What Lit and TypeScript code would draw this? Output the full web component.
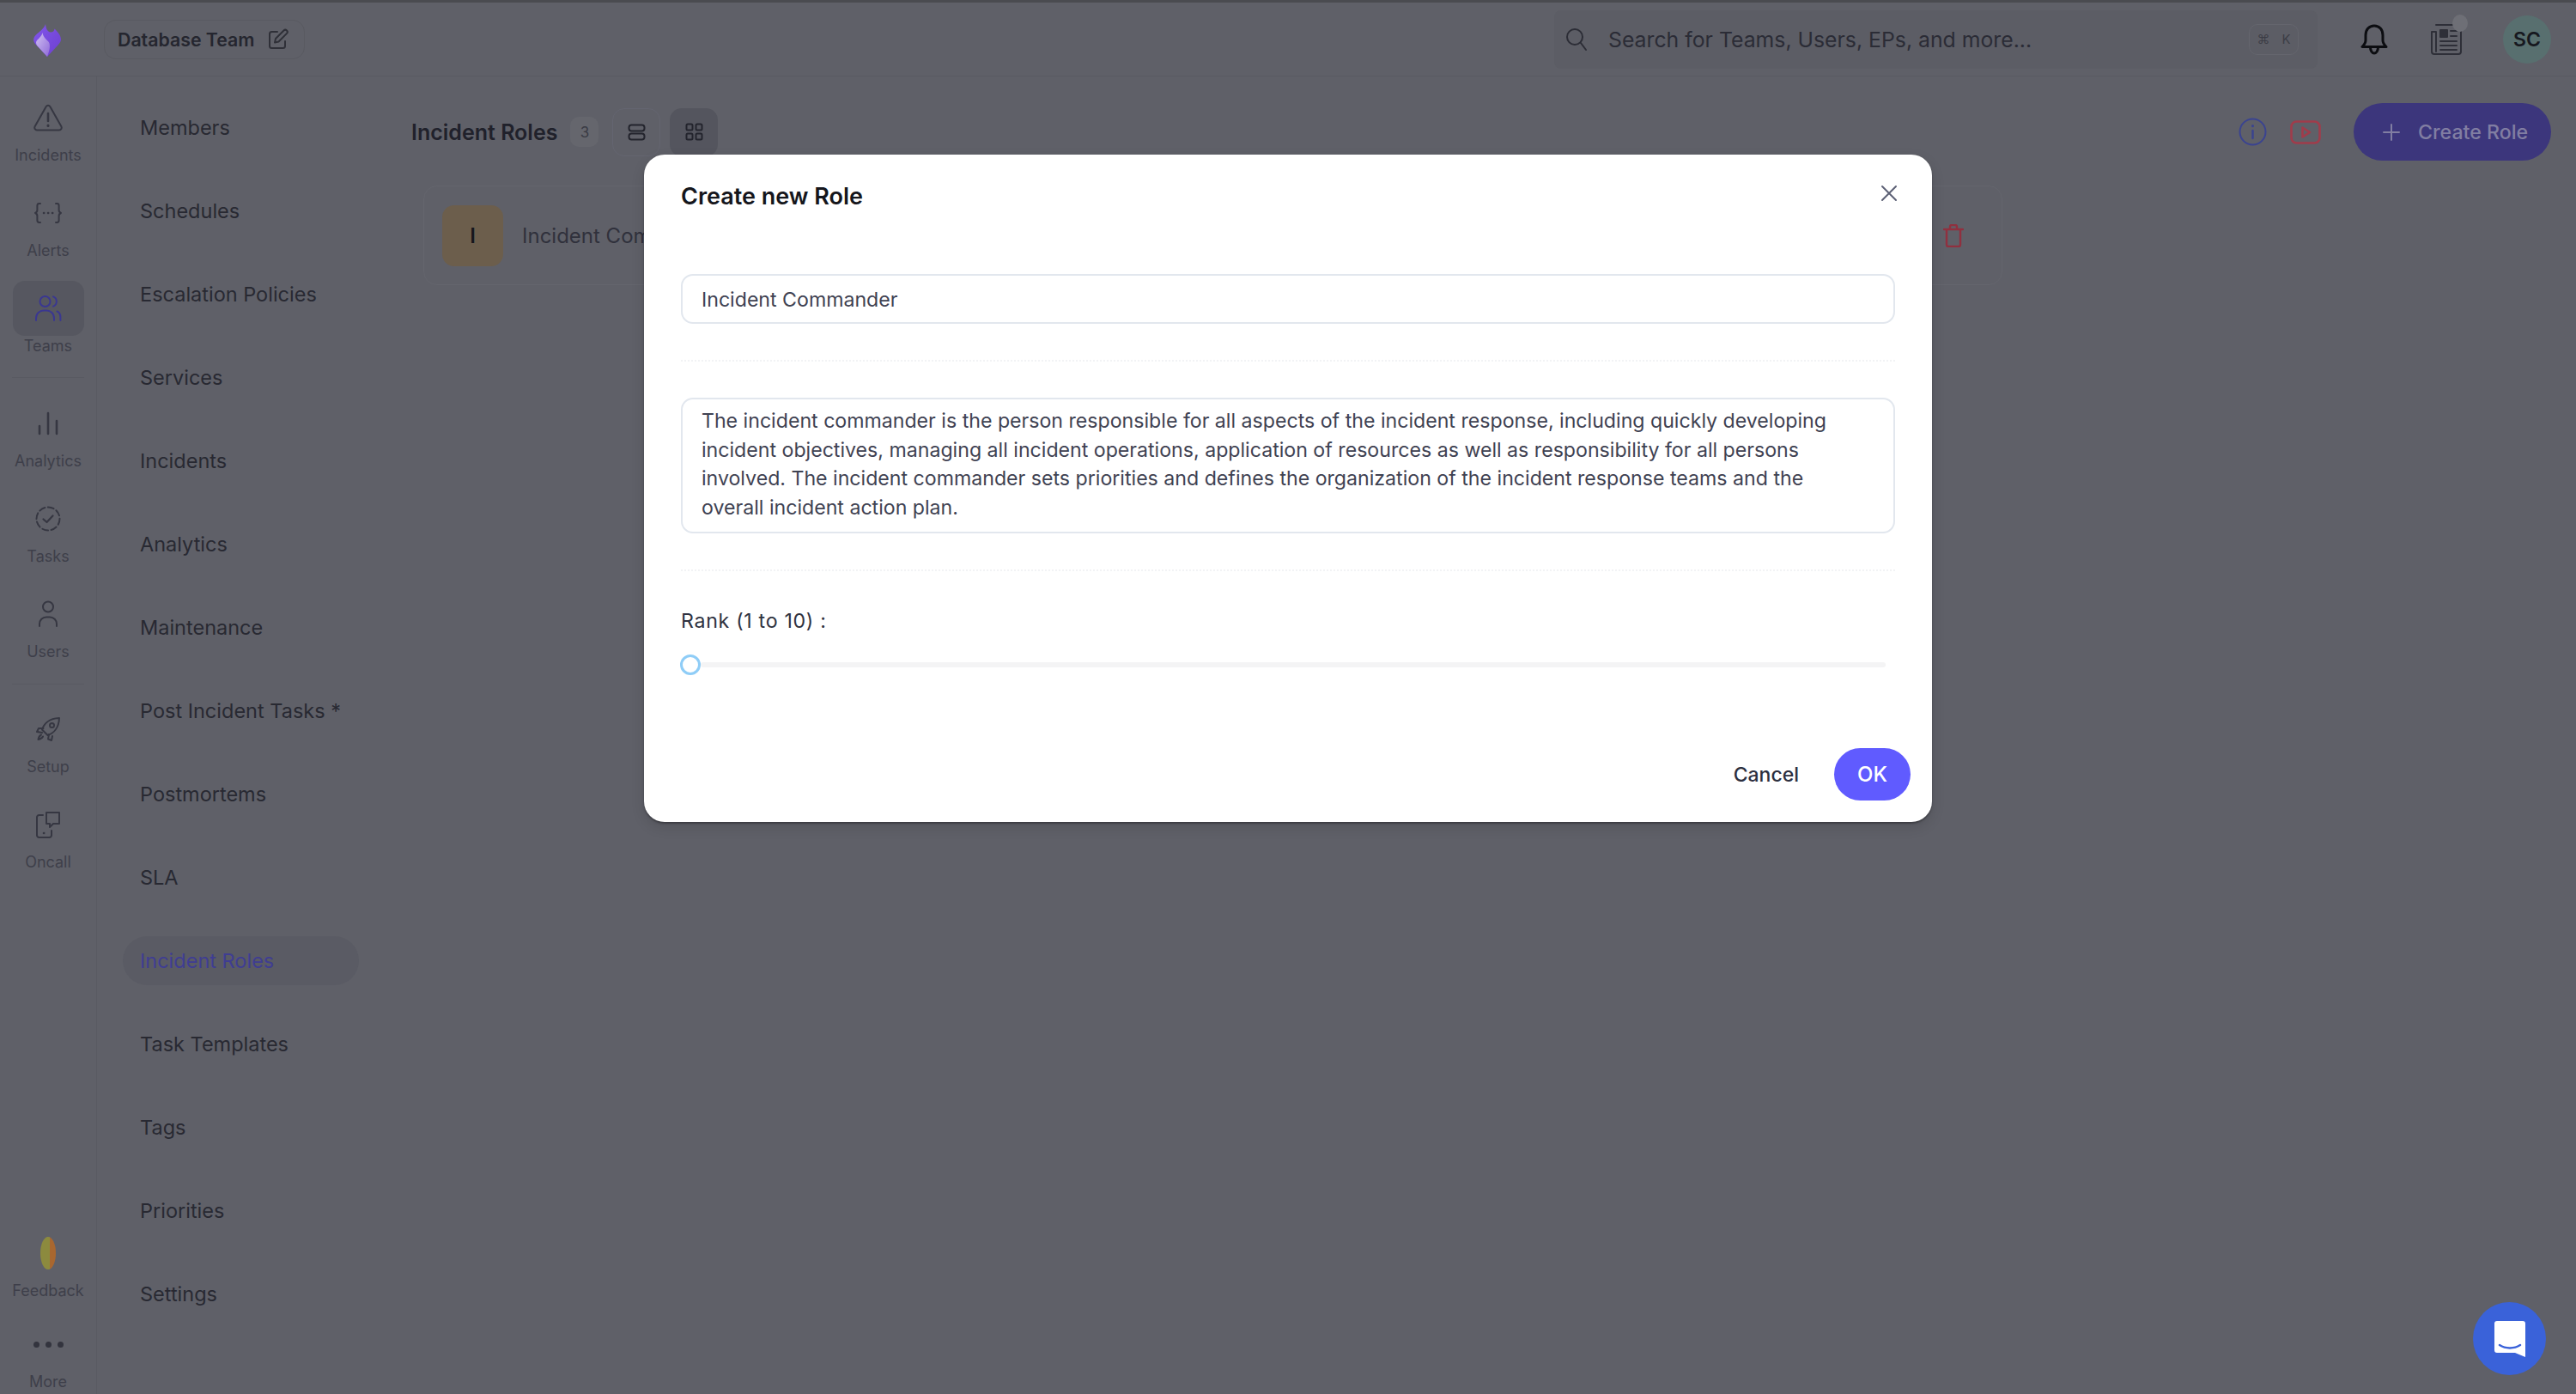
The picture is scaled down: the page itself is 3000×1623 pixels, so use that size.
import { LitElement, html, css, svg } from "lit";
import { customElement } from "lit/decorators.js";

const strokeIcon = (w: number, h: number, vb: string, body: unknown, cls = "") =>
  html`<svg class=${cls} width=${w} height=${h} viewBox=${vb} fill="none" stroke="currentColor" stroke-width="2" stroke-linecap="round" stroke-linejoin="round">${body}</svg>`;

const railIcons: Record<string, unknown> = {
  incidents: strokeIcon(36, 32, "0 0 36 32", svg`<path d="M15.6 3.2 2.6 26.2A2.8 2.8 0 0 0 5 30.4h26a2.8 2.8 0 0 0 2.4-4.2l-13-23a2.8 2.8 0 0 0-4.8 0Z"/><path d="M18 11v9" stroke-width="2.6"/><path d="M18 25v.4" stroke-width="3"/>`),
  alerts: strokeIcon(32, 26, "0 0 32 26", svg`<path d="M7 2H5.6C4 2 3.4 3 3.4 4.4v5.4c0 1.6-.8 2.6-2.4 3.2 1.6.6 2.4 1.6 2.4 3.2v5.4C3.4 23 4 24 5.6 24H7"/><path d="M25 2h1.4c1.6 0 2.2 1 2.2 2.4v5.4c0 1.6.8 2.6 2.4 3.2-1.6.6-2.4 1.6-2.4 3.2v5.4c0 1.4-.6 2.4-2.2 2.4H25"/><path d="M11 13h.2M16 13h.2M21 13h.2" stroke-width="2.6"/>`),
  teams: strokeIcon(32, 32, "0 0 32 32", svg`<circle cx="12.5" cy="8" r="6"/><path d="M22 2.4a6 6 0 0 1 0 11.2"/><path d="M2 30v-2.5C2 22 6 18.5 11 18.5h3c5 0 9 3.5 9 9V30"/><path d="M26.500 19.500c2.500 1 3.900 3.800 3.900 7V30"/>`),
  analytics: strokeIcon(26, 28, "0 0 26 28", svg`<path d="M3 17v9M13 2v24M23 11v15" stroke-width="2.6"/>`),
  tasks: strokeIcon(32, 32, "0 0 32 32", svg`<circle cx="16" cy="16" r="13.500" stroke-dasharray="7 3.500"/><path d="m10.500 16.500 4 3.500 7-7.500" stroke-width="2.200"/>`),
  users: strokeIcon(24, 32, "0 0 24 32", svg`<circle cx="12" cy="7.500" r="6"/><path d="M2 30v-2.500c0-4.500 3.500-8 8-8h4c4.500 0 8 3.500 8 8V30"/>`),
  setup: strokeIcon(30, 30, "0 0 30 30", svg`<path d="M11 18.500 8 15.500c2-6.500 8-13 20-13.500-.5 12-7 18-13.500 20Z"/><path d="M9.500 14H4l-2 4 6 1M16 21l-1 5.500 4 1.500 1-5"/><circle cx="19.500" cy="10.500" r="2.500"/><path d="M7 21.500c-2 1-3 3-3.500 5.500 2.500-.5 4.500-1.500 5.500-3.500"/>`),
  oncall: strokeIcon(30, 32, "0 0 30 32", svg`<path d="M9 5H4.500A2.500 2.500 0 0 0 2 7.500v21A2.500 2.500 0 0 0 4.500 31h12a2.500 2.500 0 0 0 2.500-2.500V23"/><path d="M13 2h15v13h-7l-4 4v-4h-4Z" /><path d="M10 26h.2" stroke-width="2.600"/>`),
};

const logo = html`<svg width="34" height="40" viewBox="0 0 34 40">
  <defs>
    <linearGradient id="lg1" x1="0" y1="0" x2="1" y2="1"><stop offset="0" stop-color="#8256ea"/><stop offset="1" stop-color="#6d3fd0"/></linearGradient>
    <linearGradient id="lg2" x1="0" y1="0" x2="1" y2="1"><stop offset="0" stop-color="#d0c0f2"/><stop offset="1" stop-color="#8f6ad8"/></linearGradient>
  </defs>
  <path fill="url(#lg1)" d="M15 1C15.500 6 17 10 21 10.500 24 10.500 25 9 25.500 6.500 29 10 33 14 33 19 33 21 32 22.500 30 25L17 39 3 24C1 21.500 .5 18.500 2 16 5 11 13 8 15 1Z"/>
  <path fill="url(#lg2)" d="M11.500 11C12 15.500 15 18 18 21 21 24 20.500 30 17 39L5.500 26.500C3.500 24 3.500 21.500 5.500 19.500 8 17 10.500 15 11.500 11Z"/>
</svg>`;

const railTop = [["incidents", "Incidents"], ["alerts", "Alerts"], ["teams", "Teams", "active"]];
const railMid = [["analytics", "Analytics"], ["tasks", "Tasks"], ["users", "Users"]];
const railLow = [["setup", "Setup"], ["oncall", "Oncall"]];

const subNav = ["Members", "Schedules", "Escalation Policies", "Services", "Incidents", "Analytics", "Maintenance", "Post Incident Tasks *", "Postmortems", "SLA", "Incident Roles", "Task Templates", "Tags", "Priorities", "Settings"];

@customElement("app-root")
export class AppRoot extends LitElement {
  static styles = css`
    :host { display: block; width: 3000px; height: 1623px; overflow: hidden; position: relative; background: #5f6068; font-family: Inter, "Noto Sans", sans-serif; color: #22232c; }
    * { box-sizing: border-box; }
    .page { display: flex; flex-direction: column; height: 1623px; }
    .top { height: 89px; flex: none; display: flex; align-items: center; border-top: 3px solid #4a4b50; border-bottom: 1px solid #595a62; background: #5f6068; }
    .logo-cell { width: 111px; display: flex; justify-content: center; padding-top: 2px; flex: none; }
    .logo-cell svg { margin-right: 2px; }
    .team { margin-left: 10px; width: 234px; height: 46px; border: 1px solid #595a61; border-radius: 14px; display: flex; align-items: center; padding-left: 15px; gap: 16px; font-size: 21.300px; font-weight: 600; color: #25262f; }
    .team svg { color: #2f3038; }
    .search { margin-left: 1455px; width: 889px; height: 68px; background: #5c5d65; border-radius: 8px; display: flex; align-items: center; padding-left: 13px; position: relative; }
    .search svg { color: #2c2d36; }
    .search span.ph { margin-left: 24px; font-size: 24.800px; color: #2b2c36; white-space: nowrap; }
    .kbd { margin-left: auto; margin-right: 22px; width: 58px; height: 36px; border: 1px solid #64656d; border-radius: 10px; display: flex; align-items: center; justify-content: center; gap: 14px; font-size: 15px; color: #3c3d46; }
    .bell { margin-left: 50px; color: #0c0d11; display: block; }
    .news { margin-left: 49px; position: relative; display: flex; color: #2e2f38; }
    .news i { position: absolute; right: -6px; top: -10px; width: 18px; height: 20px; border-radius: 50%; background: #6e6f76; }
    .avatar { margin-left: 47px; width: 56px; height: 56px; border-radius: 50%; background: #586f6f; display: flex; align-items: center; justify-content: center; font-size: 23px; font-weight: 600; color: #17181f; }

    .body { flex: 1; display: flex; min-height: 0; }
    .rail { width: 113px; flex: none; border-right: 1px solid #595a62; display: flex; flex-direction: column; padding-top: 16px; }
    .rail-item { height: 90px; margin-bottom: 21px; display: flex; flex-direction: column; align-items: center; color: #363742; }
    .rail-item.active { margin-bottom: 20px; }
    .tile { width: 83px; height: 64px; border-radius: 14px; display: flex; align-items: center; justify-content: center; flex: none; }
    .rail-item.active .tile { background: #565760; color: #3a3791; }
    .rail-item span { height: 24px; line-height: 24px; font-size: 18px; color: #3e3f4a; white-space: nowrap; }
    .rail-sep { height: 1px; margin: 2px 14px 21px; background: #595a62; flex: none; }
    .rail-sep.b { margin-bottom: 20px; }
    .rail-bottom { margin-top: auto; }
    .rail-bottom .rail-item:last-child { margin-bottom: 0; }
    .rail-bottom .rail-item:first-child { margin-bottom: 16px; }
    .coin { width: 18px; height: 38px; border-radius: 50%; background: linear-gradient(90deg, #8c8a3e 0 62%, #a9672f 62%); }
    .dots { display: flex; gap: 7px; }
    .dots i { width: 7px; height: 7px; border-radius: 50%; background: #33343e; }

    .subnav { width: 365px; flex: none; padding: 29px 0 0 30px; display: flex; flex-direction: column; gap: 37.070px; }
    .subnav a { width: 275px; height: 60px; border-radius: 30px; padding-left: 20px; display: flex; align-items: center; font-size: 23.500px; color: #282932; white-space: nowrap; }
    .subnav a.active { background: #5a5b64; color: #3f3d92; height: 57px; margin: 1.500px 0; }

    .content { flex: 1; min-width: 0; padding: 36px 29px 0 0; }
    .chead { display: flex; align-items: center; height: 57px; }
    .chead h1 { margin: 0 0 0 1px; font-size: 25px; font-weight: 600; color: #20212b; white-space: nowrap; }
    .count { margin-left: 15px; width: 33px; height: 35px; border-radius: 10px; background: #65666d; display: flex; align-items: center; justify-content: center; font-size: 17px; color: #3a3b44; }
    .vbtn { width: 56px; height: 56px; border-radius: 14px; display: flex; align-items: center; justify-content: center; color: #23242d; }
    .vbtn.first { margin-left: 16px; border: 1px solid #646570; }
    .vbtn.on { margin-left: 11px; background: #54555e; }
    .chead .right { margin-left: auto; display: flex; align-items: center; }
    .info { color: #3a4390; display: block; }
    .yt { margin-left: 27px; color: #a03c4b; display: block; }
    .create { margin-left: 38px; width: 230px; height: 67px; border-radius: 34px; background: #3c367c; display: flex; align-items: center; padding-left: 34px; gap: 21px; font-size: 23.200px; font-weight: 500; color: #817ea2; white-space: nowrap; }
    .card { margin: 34px 0 0 15px; width: 1839px; height: 116px; border: 1px solid #64656d; border-radius: 16px; padding: 0 44px 0 21px; display: flex; align-items: center; }
    .tag { width: 71px; height: 71px; border-radius: 14px; background: #6c5e4c; display: flex; align-items: center; justify-content: center; font-size: 24px; font-weight: 600; color: #15161c; }
    .card .name { margin-left: 22px; font-size: 24px; color: #30313c; white-space: nowrap; }
    .trash { margin-left: auto; color: #90303f; display: block; }

    .scrim { position: absolute; inset: 0; display: flex; justify-content: center; align-items: flex-start; padding-top: 180px; }
    .modal { width: 1500px; height: 777px; background: #fff; border-radius: 24px; box-shadow: 0 6px 16px rgba(0,0,0,.12), 0 2px 2px rgba(40,40,45,.5); padding: 0 43px; display: flex; flex-direction: column; }
    .mhead { height: 95px; display: flex; align-items: center; justify-content: space-between; flex: none; padding-top: 1px; }
    .mhead h2 { margin: 0; font-size: 27px; font-weight: 600; color: #15161c; }
    .close { color: #5c6075; margin-right: -3px; margin-top: -6px; display: block; }
    .field { margin-top: 44px; height: 58px; border: 2px solid #e2e7ee; border-radius: 14px; display: flex; align-items: center; padding: 1px 0 0 22px; font-size: 23.150px; color: #3f4252; }
    .dash { margin-top: 42px; height: 1px; border-top: 2px dotted #f2f3f5; flex: none; }
    .area { margin-top: 42px; height: 158px; border: 2px solid #e2e7ee; border-radius: 14px; padding: 9px 0 0 22px; font-size: 23.150px; line-height: 33.600px; color: #3f4252; white-space: nowrap; }
    .rank { margin-top: 44px; font-size: 23.150px; letter-spacing: .7px; line-height: 28px; color: #2f3240; height: 28px; }
    .slider { margin-top: 25px; display: flex; align-items: center; height: 24px; padding-right: 11px; }
    .thumb { width: 24px; height: 24px; border-radius: 50%; border: 3px solid #8fcdf7; background: #fff; flex: none; margin-left: -1px; }
    .track { flex: 1; height: 6px; background: #f4f4f5; border-radius: 3px; }
    .mfoot { margin-top: auto; margin-bottom: 25px; margin-right: -18px; display: flex; align-items: center; justify-content: flex-end; height: 61px; }
    .cancel { font-size: 23px; font-weight: 500; color: #2c2f3e; margin-right: 41px; }
    .ok { width: 89px; height: 61px; border-radius: 31px; background: #605bff; color: #fff; display: flex; align-items: center; justify-content: center; font-size: 24px; font-weight: 500; }

    .chat { position: absolute; left: 2880px; top: 1516px; width: 85px; height: 85px; border-radius: 50%; background: #3a62d9; display: flex; align-items: center; justify-content: center; }
  `;

  railItem(i: string[]) {
    return html`<div class="rail-item ${i[2] ?? ""}"><div class="tile">${railIcons[i[0]]}</div><span>${i[1]}</span></div>`;
  }

  render() {
    return html`
      <div class="page">
        <header class="top">
          <div class="logo-cell">${logo}</div>
          <div class="team">Database Team
            ${strokeIcon(24, 25, "0 0 24 25", svg`<path d="M11 4H4.500A2.500 2.500 0 0 0 2 6.500v14A2.500 2.500 0 0 0 4.500 23h13a2.500 2.500 0 0 0 2.500-2.500V15"/><path d="M18.500 2.500a2.400 2.400 0 0 1 3.500 3.400L12.500 15.500l-4.500 1 1-4.500Z"/>`)}
          </div>
          <div class="search">
            ${strokeIcon(26, 28, "0 0 26 28", svg`<circle cx="11" cy="11" r="9"/><path d="m18 18 6 8"/>`)}
            <span class="ph">Search for Teams, Users, EPs, and more...</span>
            <div class="kbd"><span>⌘</span><span>K</span></div>
          </div>
          ${strokeIcon(32, 38, "0 0 32 38", svg`<path d="M16 3c-6 0-10 4.500-10 11v6c0 3-1.500 5-4 7.500h28c-2.500-2.500-4-4.500-4-7.500v-6c0-6.500-4-11-10-11Z" stroke-width="3"/><path d="M11.500 28c0 4 2 7 4.500 7s4.500-3 4.500-7" stroke-width="3"/>`, "bell")}
          <div class="news">
            ${strokeIcon(38, 38, "0 0 38 38", svg`<path d="M7 2h29v31a3 3 0 0 1-3 3H5a3 3 0 0 1-3-3V10h5v23"/><path d="M12 8h8v8h-8Z" fill="currentColor"/><path d="M24 9h7M24 15h7M12 21h19M12 26h19M12 31h19"/>`)}
            <i></i>
          </div>
          <div class="avatar">SC</div>
        </header>
        <div class="body">
          <nav class="rail">
            ${railTop.map((i) => this.railItem(i))}
            <div class="rail-sep"></div>
            ${railMid.map((i) => this.railItem(i))}
            <div class="rail-sep b"></div>
            ${railLow.map((i) => this.railItem(i))}
            <div class="rail-bottom">
              <div class="rail-item"><div class="tile"><div class="coin"></div></div><span>Feedback</span></div>
              <div class="rail-item"><div class="tile"><div class="dots"><i></i><i></i><i></i></div></div><span>More</span></div>
            </div>
          </nav>
          <nav class="subnav">
            ${subNav.map((n) => html`<a class=${n === "Incident Roles" ? "active" : ""}>${n}</a>`)}
          </nav>
          <main class="content">
            <div class="chead">
              <h1>Incident Roles</h1>
              <div class="count">3</div>
              <div class="vbtn first">${strokeIcon(21, 20, "0 0 21 20", svg`<rect x="1.500" y="1.500" width="18" height="7" rx="3"/><rect x="1.500" y="11.500" width="18" height="7" rx="3"/>`)}</div>
              <div class="vbtn on">${strokeIcon(21, 21, "0 0 21 21", svg`<rect x="1.500" y="1.500" width="7" height="7" rx="1.500"/><rect x="12.500" y="1.500" width="7" height="7" rx="1.500"/><rect x="1.500" y="12.500" width="7" height="7" rx="1.500"/><rect x="12.500" y="12.500" width="7" height="7" rx="1.500"/>`)}</div>
              <div class="right">
                ${strokeIcon(33, 33, "0 0 33 33", svg`<circle cx="16.500" cy="16.500" r="15"/><path d="M16.500 15v9" stroke-width="2.400"/><path d="M16.500 9.500v.3" stroke-width="3"/>`, "info")}
                ${strokeIcon(36, 28, "0 0 36 28", svg`<rect x="1.500" y="1.500" width="33" height="25" rx="6" stroke-width="2.600"/><path d="M14.500 8.500v11l8.500-5.500Z" stroke-width="2.600"/>`, "yt")}
                <div class="create">
                  ${strokeIcon(20, 20, "0 0 20 20", svg`<path d="M10 1v18M1 10h18"/>`)}
                  <span>Create Role</span>
                </div>
              </div>
            </div>
            <div class="card">
              <div class="tag">I</div>
              <div class="name">Incident Commander</div>
              ${strokeIcon(24, 27, "0 0 24 27", svg`<path d="M1 6h22M8 6V3a2 2 0 0 1 2-2h4a2 2 0 0 1 2 2v3M4 6v18a2 2 0 0 0 2 2h12a2 2 0 0 0 2-2V6" stroke-width="2.400"/>`, "trash")}
            </div>
          </main>
        </div>
      </div>

      <div class="scrim">
        <section class="modal">
          <div class="mhead">
            <h2>Create new Role</h2>
            ${strokeIcon(20, 20, "0 0 20 20", svg`<path d="m2 2 16 16M18 2 2 18"/>`, "close")}
          </div>
          <div class="field">Incident Commander</div>
          <div class="dash"></div>
          <div class="area">The incident commander is the person responsible for all aspects of the incident response, including quickly developing<br>incident objectives, managing all incident operations, application of resources as well as responsibility for all persons<br>involved. The incident commander sets priorities and defines the organization of the incident response teams and the<br>overall incident action plan.</div>
          <div class="dash"></div>
          <div class="rank">Rank (1 to 10) :</div>
          <div class="slider"><div class="thumb"></div><div class="track"></div></div>
          <div class="mfoot"><span class="cancel">Cancel</span><div class="ok">OK</div></div>
        </section>
      </div>

      <div class="chat">
        <svg width="38" height="44" viewBox="0 0 38 44"><path fill="#fff" d="M4 1h30a3 3 0 0 1 3 3v39l-12-5H4a3 3 0 0 1-3-3V4a3 3 0 0 1 3-3Z"/><path fill="none" stroke="#3a62d9" stroke-width="2.500" stroke-linecap="round" d="M7 29c7 4.500 17 4.500 24 0"/></svg>
      </div>
    `;
  }
}
